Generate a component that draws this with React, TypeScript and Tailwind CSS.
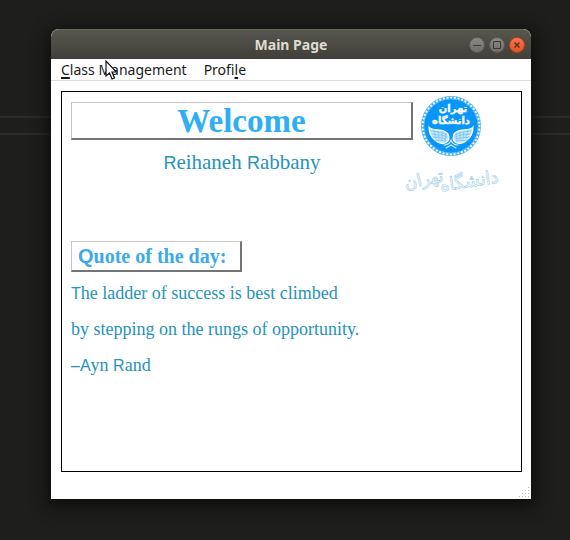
import type { ReactNode } from "react";

/* Capitals are set in a smaller sans face, the rest of each word in a serif. */
function Mixed({ text, caps }: { text: string; caps: string }) {
  return (
    <>
      {text.split(/([A-Z–]+)/).map((part, i) =>
        /^[A-Z–]/.test(part) ? (
          <span key={i} className={`font-['Liberation_Sans',sans-serif] ${caps}`}>
            {part}
          </span>
        ) : (
          part
        ),
      )}
    </>
  );
}

function Emblem() {
  const feathers = [0, 1, 2, 3];
  return (
    <svg viewBox="0 0 62 62" className="ml-[7px] block size-[62px]" role="img" aria-label="دانشگاه تهران">
      <circle cx="31" cy="31" r="27" fill="#0a96f7" />
      <circle cx="31" cy="31" r="28.4" fill="none" stroke="#45b0f9" strokeWidth="3.2" />
      <circle
        cx="31"
        cy="31"
        r="28.4"
        fill="none"
        stroke="#fff"
        strokeWidth="2.3"
        strokeDasharray="0 3.717"
        strokeLinecap="round"
      />
      <g fill="#fff" stroke="#fff" strokeWidth="0.3" textAnchor="middle" fontFamily="'DejaVu Sans', sans-serif" fontWeight="bold">
        <text x="33" y="17" fontSize="10">
          تهران
        </text>
        <text x="31" y="29" fontSize="10">
          دانشگاه
        </text>
      </g>
      {["", "translate(62 0) scale(-1 1)"].map((flip) => (
        <g key={flip} transform={flip} fill="none" strokeLinecap="round">
          <path d="M9 32C12 36 19 34 24 36C29 38 30 43 28 46C25 50 19 49 15 45C11 42 9 37 9 32Z" fill="#c4e6fd" stroke="#fff" strokeWidth="1.2" />
          {feathers.map((n) => (
            <path
              key={n}
              d={`M${11 + n} ${36 + n * 3}C${15 + n} ${37 + n * 3} ${20 + n} ${36 + n * 3} ${27 - n / 2} ${40 + n * 2}`}
              stroke="#63bcfa"
              strokeWidth="0.7"
            />
          ))}
          {feathers.map((n) => (
            <path key={n} d={`M${14 + n * 4} ${35 + n}L${16 + n * 3} ${43 + n}`} stroke="#63bcfa" strokeWidth="0.6" />
          ))}
          <path d="M24 50C27 50 30 48 31 45M26 53L31 50" stroke="#d5edfe" strokeWidth="1.1" />
        </g>
      ))}
    </svg>
  );
}

function Wordmark() {
  return (
    <svg viewBox="0 0 96 42" className="-ml-[9px] block h-[42px] w-24 overflow-visible" role="img" aria-label="دانشگاه تهران">
      <g fill="#fff" stroke="#a9d3ea" strokeWidth="0.7" fontFamily="'DejaVu Sans', sans-serif" textAnchor="middle">
        <text x="66" y="30" fontSize="18" transform="rotate(-9 66 30)">
          دانشگاه
        </text>
        <text x="21" y="28" fontSize="17" transform="rotate(-12 21 28)">
          تهران
        </text>
      </g>
    </svg>
  );
}

function WindowButton({ label, close, children }: { label: string; close?: boolean; children: ReactNode }) {
  return (
    <button
      type="button"
      aria-label={label}
      className={`flex size-4 items-center justify-center rounded-full border ${
        close
          ? "border-[#b5431d] bg-linear-to-b from-[#f4784f] to-[#e5511f] text-[#5c2412]"
          : "border-[#5b5a54] bg-linear-to-b from-[#8b8983] to-[#706e68] text-[#3b3a35]"
      }`}
    >
      <svg viewBox="0 0 14 14" className="size-[14px] shrink-0" fill="none" stroke="currentColor">
        {children}
      </svg>
    </button>
  );
}

const raised = "border-t border-r-2 border-b-2 border-l border-t-[#c4c4c4] border-l-[#c4c4c4] border-r-[#747474] border-b-[#747474]";

export default function App() {
  return (
    <div className="relative min-h-screen bg-[#1e1e1c] pt-[29px] pr-[39px] pb-10 pl-[51px]">
      <div className="absolute inset-x-0 top-[116px] h-[19px] border-y-2 border-[#2a2a29]" />

      <main className="relative rounded-t-lg bg-white font-['Noto_Sans',sans-serif] shadow-[0_4px_16px_4px_#0e0e0e]">
        <header className="relative flex h-[30px] items-center justify-end gap-1 rounded-t-lg border-t border-[#66665d] bg-linear-to-b from-[#57574e] to-[#403f39] pr-[6px]">
          <h1 className="absolute inset-x-0 text-center text-sm font-bold text-[#dfdbd2]">Main Page</h1>
          <WindowButton label="Minimize">
            <path d="M3 7.5H11" />
          </WindowButton>
          <WindowButton label="Maximize">
            <path d="M3.5 3.5H10.5V10.5H3.5Z" />
          </WindowButton>
          <WindowButton label="Close" close>
            <path d="M4.5 4.5L9.5 9.5M9.5 4.5L4.5 9.5" strokeWidth="1.2" />
          </WindowButton>
        </header>

        <nav className="relative flex h-[22px] items-center gap-[17px] border-b border-[#dcdcdc] px-[10px] text-sm leading-5 text-[#1a1a1a]">
          <button type="button">
            <span className="underline decoration-2 underline-offset-2">C</span>lass Management
          </button>
          <button type="button">
            Profi<span className="underline decoration-2 underline-offset-2">l</span>e
          </button>
          <svg viewBox="0 0 12 20" className="absolute top-[1px] left-[54px] h-5 w-3" aria-hidden="true">
            <path d="M1 1V16L4.5 13L7 19L9.5 18L7 12H11.5Z" fill="#fff" stroke="#111" strokeWidth="1.2" />
          </svg>
        </nav>

        <div className="pt-[10px] pr-[9px] pb-[27px] pl-[10px]">
          <section className="flex min-h-[381px] border border-black pl-[9px] font-['Liberation_Serif',serif] text-[#2593bb]">
            <div className="w-[342px] shrink-0 pt-[10px]">
              <h2 className={`flex h-[38px] items-center justify-center text-[33px] leading-9 font-bold text-[#2eaef5] ${raised}`}>
                Welcome
              </h2>
              <p className="pt-2 text-center text-[21px] leading-7">
                <Mixed text="Reihaneh Rabbany" caps="text-[18px] leading-none" />
              </p>
              <h3 className={`mt-[65px] flex h-[31px] w-[171px] items-center px-[6px] text-xl font-bold whitespace-nowrap text-[#3caae8] ${raised}`}>
                <Mixed text="Quote of the day:" caps="text-xl leading-none" />
              </h3>
              <blockquote className="pt-[3px] text-[18px] leading-9">
                <p>
                  <Mixed text="The ladder of success is best climbed" caps="text-[16px] leading-none" />
                </p>
                <p>by stepping on the rungs of opportunity.</p>
                <p>
                  <Mixed text="–Ayn Rand" caps="text-[16px] leading-none" />
                </p>
              </blockquote>
            </div>
            <div className="shrink-0 pt-[3px]">
              <Emblem />
              <Wordmark />
            </div>
          </section>
        </div>

        <svg viewBox="0 0 18 12" className="absolute right-0 bottom-0 h-3 w-[18px]" fill="#bdbdbd" aria-hidden="true">
          {[0, 1, 2, 3].map((row) =>
            Array.from({ length: row + 1 }, (_, col) => (
              <rect key={`${row}-${col}`} x={15 - col * 3} y={row * 3} width="1" height="1" />
            )),
          )}
        </svg>
      </main>
    </div>
  );
}
